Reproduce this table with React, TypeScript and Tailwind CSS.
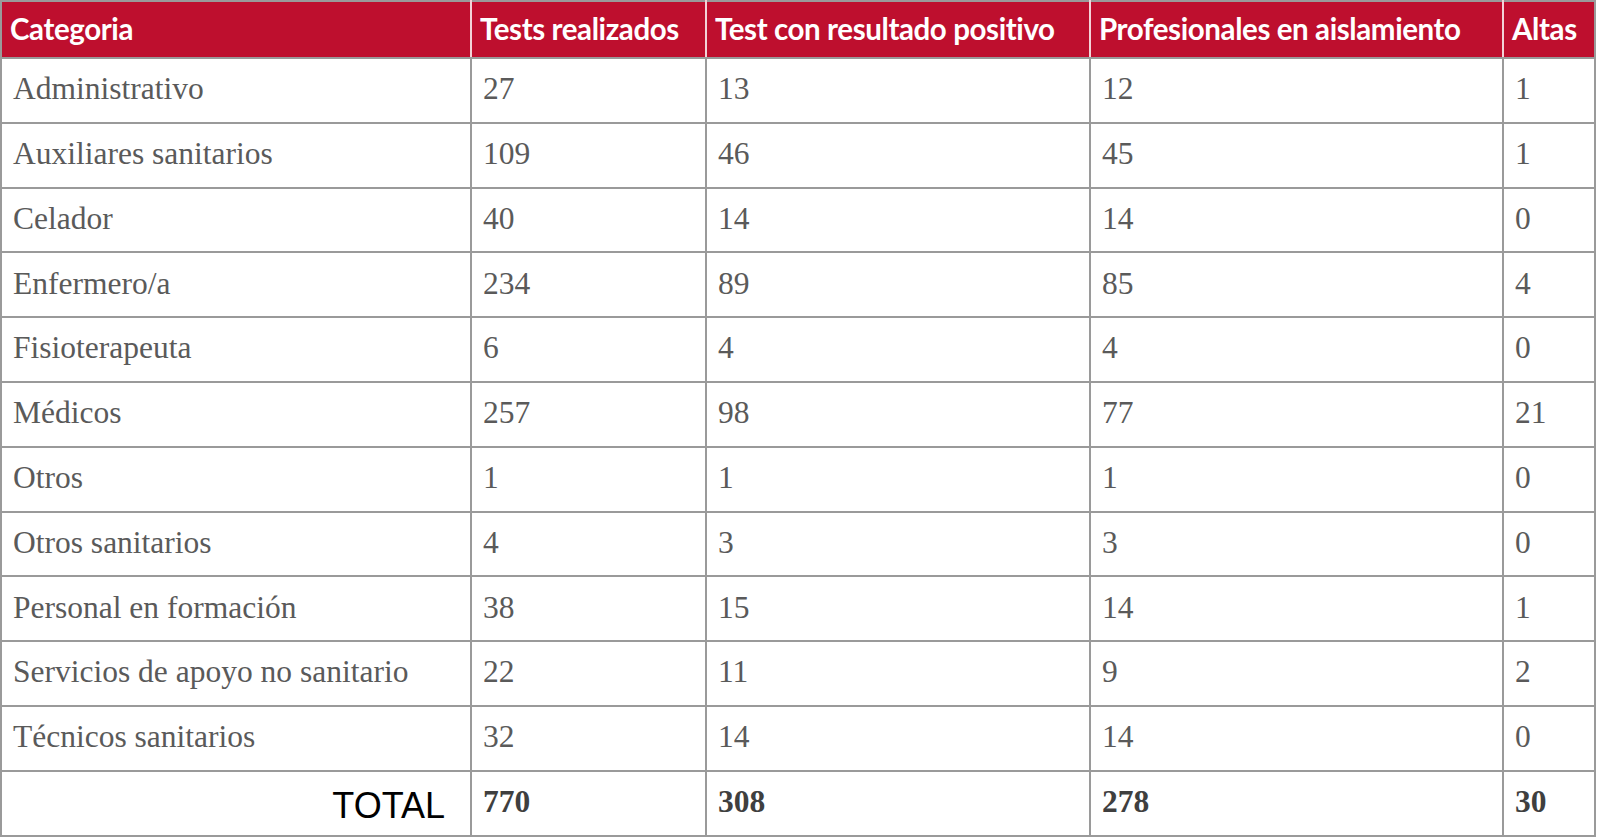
import React from 'react';

const rows: [string, number, number, number, number][] = [
  ['Administrativo', 27, 13, 12, 1],
  ['Auxiliares sanitarios', 109, 46, 45, 1],
  ['Celador', 40, 14, 14, 0],
  ['Enfermero/a', 234, 89, 85, 4],
  ['Fisioterapeuta', 6, 4, 4, 0],
  ['Médicos', 257, 98, 77, 21],
  ['Otros', 1, 1, 1, 0],
  ['Otros sanitarios', 4, 3, 3, 0],
  ['Personal en formación', 38, 15, 14, 1],
  ['Servicios de apoyo no sanitario', 22, 11, 9, 2],
  ['Técnicos sanitarios', 32, 14, 14, 0],
];

const headers = ['Categoria', 'Tests realizados', 'Test con resultado positivo', 'Profesionales en aislamiento', 'Altas'];

const App = () => {
  return (
    <div className="w-[1600px] h-[838px] bg-white">
      <table className="w-[1594px] border-collapse table-fixed border-2 border-[#9a9a9a]">
        <colgroup>
          <col className="w-[470px]" />
          <col className="w-[235px]" />
          <col className="w-[384px]" />
          <col className="w-[413px]" />
          <col className="w-[92px]" />
        </colgroup>
        <thead>
          <tr className="h-[57px] bg-[#be0f2e]">
            {headers.map((h) => (
              <th
                key={h}
                className="border-x-2 border-x-[#f3d3d8] border-b-2 border-b-[#9a9a9a] px-[8px] text-left align-middle font-['Lato',sans-serif] text-[29.5px] font-bold text-white tracking-[-0.4px] first:border-l-[#9a9a9a] last:border-r-[#9a9a9a]"
              >
                {h}
              </th>
            ))}
          </tr>
        </thead>
        <tbody className="font-['Liberation_Serif',serif] text-[31.5px] text-[#5a5a5a]">
          {rows.map((r) => (
            <tr key={r[0]} className="h-[64.8px]">
              {r.map((c, i) => (
                <td key={i} className="border-2 border-[#9a9a9a] px-[11px] pb-[3px] align-middle">
                  {c}
                </td>
              ))}
            </tr>
          ))}
          <tr className="h-[64.8px]">
            <td className="border-2 border-[#9a9a9a] pl-[11px] pr-[25px] pt-[6px] text-right font-['Liberation_Sans',sans-serif] text-[36px] text-black align-middle">
              TOTAL
            </td>
            {[770, 308, 278, 30].map((v) => (
              <td key={v} className="border-2 border-[#9a9a9a] px-[11px] pb-[3px] align-middle text-[#3f3f3f] font-bold">
                {v}
              </td>
            ))}
          </tr>
        </tbody>
      </table>
    </div>
  );
};

export default App;
